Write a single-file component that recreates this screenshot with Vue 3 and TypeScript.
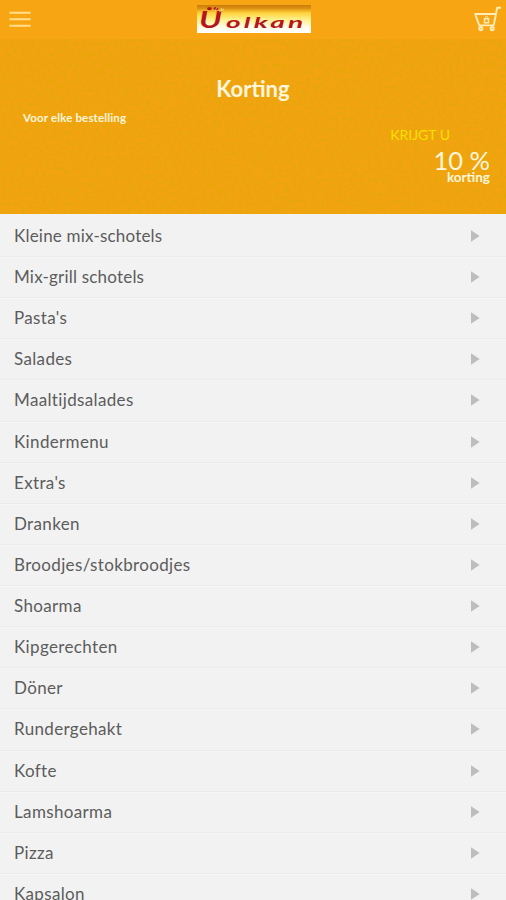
<script setup lang="ts">
interface Category {
  name: string
}

const categories: Category[] = [
  'Kleine mix-schotels',
  'Mix-grill schotels',
  "Pasta's",
  'Salades',
  'Maaltijdsalades',
  'Kindermenu',
  "Extra's",
  'Dranken',
  'Broodjes/stokbroodjes',
  'Shoarma',
  'Kipgerechten',
  'Döner',
  'Rundergehakt',
  'Kofte',
  'Lamshoarma',
  'Pizza',
  'Kapsalon',
].map((name) => ({ name }))
</script>

<template>
  <main class="screen">
    <header class="topbar">
      <button class="icon-button" aria-label="Menu">
        <svg width="22" height="18" viewBox="0 0 22 18">
          <path d="M1 2.7H21M1 9.2H21M1 15.7H21" stroke="#ffdf8c" stroke-width="1.9" stroke-linecap="round" />
        </svg>
      </button>
      <svg class="logo" width="114" height="28" viewBox="0 0 114 28">
        <defs>
          <linearGradient id="logo-bg" x1="0" y1="0" x2="0" y2="1">
            <stop offset="0" stop-color="#c97c0c" />
            <stop offset="0.12" stop-color="#dd9012" />
            <stop offset="0.28" stop-color="#ffd23c" />
            <stop offset="0.52" stop-color="#fff08c" />
            <stop offset="0.78" stop-color="#fffbe6" />
            <stop offset="1" stop-color="#ffffff" />
          </linearGradient>
        </defs>
        <rect width="114" height="28" fill="url(#logo-bg)" />
        <g class="logo-text">
          <text transform="translate(2 22.5) scale(1.5 1)" font-size="22">Ü</text>
          <text transform="translate(29 23) scale(1.75 1)" font-size="16" letter-spacing="1.8">olkan</text>
        </g>
        <path d="M18 6l2-4M22 7l5-3M24 3l1 2" stroke="#fff3c4" stroke-width="0.9" opacity="0.7" />
      </svg>
      <button class="icon-button" aria-label="Winkelwagen">
        <svg width="28" height="26" viewBox="0 0 28 26" fill="none" stroke="#ffecb8" stroke-width="1.9">
          <path d="M27 1.7H23.2L19.7 19.4H5.2L1.2 8H21.8" stroke-linejoin="round" />
          <path d="M10.5 12.8h4v4h-4z" stroke-width="1.5" />
          <circle cx="12.5" cy="11.6" r="1.2" stroke-width="1" />
          <circle cx="6.8" cy="22.6" r="1.6" />
          <circle cx="18.2" cy="22.6" r="1.6" />
        </svg>
      </button>
    </header>

    <section class="promo">
      <svg class="texture" aria-hidden="true">
        <filter id="paper" x="0" y="0" width="100%" height="100%">
          <feTurbulence type="fractalNoise" baseFrequency="0.28" numOctaves="2" seed="4" />
          <feColorMatrix values="0 0 0 0 0.7  0 0 0 0 0.4  0 0 0 0 0  1.3 0 0 0 -0.5" />
        </filter>
        <rect width="100%" height="100%" filter="url(#paper)" />
      </svg>
      <h1 class="title">Korting</h1>
      <p class="condition">Voor elke bestelling</p>
      <p class="receive">KRIJGT U</p>
      <p class="amount">10 %</p>
      <p class="unit">korting</p>
    </section>

    <ul class="menu">
      <li v-for="category in categories" :key="category.name" class="row">
        <span>{{ category.name }}</span>
        <svg class="arrow" width="9" height="12" viewBox="0 0 9 12"><path d="M0 0.3L8.6 6L0 11.7Z" fill="#bdbdbd" /></svg>
      </li>
    </ul>
  </main>
</template>

<style>
body {
  margin: 0;
  background: #f2f2f2;
}
</style>

<style scoped>
.screen {
  height: 900px;
  overflow: hidden;
  background: #f2f2f2;
  font-family: Lato, "Open Sans", sans-serif;
  color: #5c5c5c;
}
.topbar {
  display: flex;
  align-items: center;
  justify-content: space-between;
  box-sizing: border-box;
  height: 39px;
  padding: 0 4px 1px 9px;
  background: #f8a513;
}
.icon-button {
  display: flex;
  padding: 0;
  border: 0;
  background: none;
}
.logo {
  margin-left: 2px;
}
.logo text {
  font-family: Lato, sans-serif;
  font-weight: 700;
  font-style: italic;
}
.logo-text {
  fill: #b5151b;
}
.promo {
  position: relative;
  box-sizing: border-box;
  height: 175px;
  padding-top: 36px;
  background: #f3a311;
  color: #fff6dc;
}
.texture {
  position: absolute;
  inset: 0;
  width: 100%;
  height: 100%;
}
.title,
.condition,
.receive,
.amount,
.unit {
  position: relative;
  margin: 0;
}
.title {
  font-size: 22px;
  font-weight: 700;
  line-height: 28px;
  text-align: center;
}
.condition {
  padding: 7px 0 0 23px;
  font-size: 11.5px;
  font-weight: 700;
  line-height: 16px;
  letter-spacing: 0.15px;
}
.receive {
  padding-right: 56px;
  font-size: 14px;
  line-height: 17px;
  text-align: right;
  color: #f8e000;
}
.amount {
  padding: 5px 16px 0 0;
  font-size: 25.5px;
  line-height: 24px;
  text-align: right;
}
.unit {
  margin-top: -3px;
  padding-right: 16px;
  font-size: 13.5px;
  font-weight: 700;
  line-height: 16px;
  text-align: right;
}
.menu {
  margin: 0;
  padding: 1.9px 0 0;
  list-style: none;
}
.row {
  display: flex;
  align-items: center;
  justify-content: space-between;
  box-sizing: border-box;
  height: 41.13px;
  padding: 0 26px 0 14px;
  border-bottom: 1px solid #ebebeb;
  box-shadow: 0 1px #f6f6f6;
  font-size: 17px;
  line-height: 24px;
  letter-spacing: 0.35px;
}
.row:nth-child(-n + 2) {
  letter-spacing: 0.2px;
}
</style>
